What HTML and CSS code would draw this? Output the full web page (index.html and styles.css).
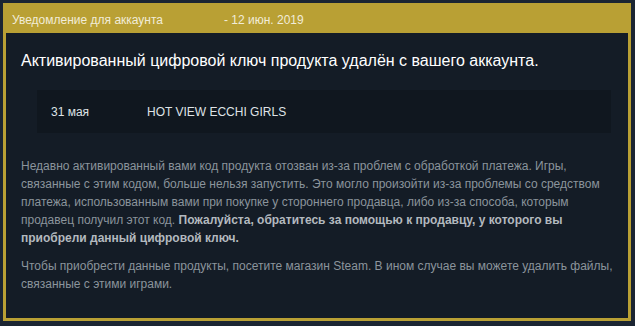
FILE: index.html
```html
<!DOCTYPE html>
<html lang="ru">

<head>
	<meta charset="UTF-8">
	<title>Уведомление для аккаунта</title>
	<link rel="stylesheet" href="styles.css">
</head>

<body>

	<div class="notice">
		<header class="noticeHeader">
			<span class="noticeTitle">Уведомление для аккаунта</span>
			<span class="noticeDate">- 12 июн. 2019</span>
		</header>

		<section class="noticeBody">
			<h2>Активированный цифровой ключ продукта удалён с вашего аккаунта.</h2>

			<div class="productRow">
				<span class="productDate">31 мая</span>
				<span class="productName">HOT VIEW ECCHI GIRLS</span>
			</div>

			<p>
				Недавно активированный вами код продукта отозван из-за проблем с обработкой платежа. Игры,
				связанные с этим кодом, больше нельзя запустить. Это могло произойти из-за проблемы со средством
				платежа, использованным вами при покупке у стороннего продавца, либо из-за способа, которым
				продавец получил этот код. <b>Пожалуйста, обратитесь за помощью к продавцу, у которого вы
				приобрели данный цифровой ключ.</b>
			</p>

			<p>
				Чтобы приобрести данные продукты, посетите магазин Steam. В ином случае вы можете удалить файлы,
				связанные с этими играми.
			</p>
		</section>
	</div>

</body>

</html>
```

FILE: styles.css
```css
* {
	margin: 0;
	padding: 0;
	box-sizing: border-box;
}

body {
	font-family: Arial, 'Liberation Sans', sans-serif;
	background-color: #1b2532;
	padding: 3px 4px 0 3px;
}

.notice {
	border: 3px solid #b9a034;
	background-color: #141c26;
	height: 318px;
}

.noticeHeader {
	background-color: #b9a034;
	color: #f1ecd8;
	font-size: 12px;
	height: 27px;
	padding: 7px 0 0 6px;
	display: flex;
}

.noticeTitle {
	width: 212px;
}

.noticeBody {
	padding: 18px 12px 0 15px;
}

.noticeBody h2 {
	font-weight: normal;
	font-size: 16px;
	color: #ffffff;
	line-height: 20px;
}

.productRow {
	display: flex;
	align-items: center;
	height: 43px;
	margin: 19px 5px 0 16px;
	padding-left: 14px;
	background-color: #10171f;
	color: #dfe3e6;
	font-size: 12px;
}

.productDate {
	width: 96px;
}

.noticeBody p {
	color: #8b949c;
	font-size: 12px;
	line-height: 18px;
	margin-top: 24px;
}

.noticeBody p + p {
	margin-top: 10px;
}

.noticeBody b {
	color: #b3b9bf;
}
```
